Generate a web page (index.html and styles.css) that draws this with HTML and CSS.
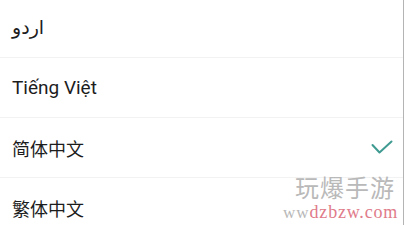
FILE: index.html
```html
<!DOCTYPE html>
<html>
<head>
<meta charset="utf-8">
<link rel="stylesheet" href="styles.css">
</head>
<body>
<div class="screen">
  <ul class="list">
    <li class="row"><span class="label urdu" dir="rtl">اردو</span></li>
    <li class="row"><span class="label latin">Tiếng Việt</span></li>
    <li class="row"><span class="label cjk">简体中文</span>
      <svg class="check" width="22" height="16" viewBox="0 0 22 16"><polyline points="1.5,5 8.5,12.5 20.5,1.5" fill="none" stroke="#3f9b92" stroke-width="2" stroke-linecap="round" stroke-linejoin="round"/></svg>
    </li>
    <li class="row"><span class="label cjk">繁体中文</span></li>
  </ul>
  <div class="wm">
    <div class="wm-cn">玩爆手游</div>
    <div class="wm-url"><span class="wm-gray">ww</span><span class="wm-red">dzbzw.com</span></div>
  </div>
</div>
</body>
</html>
```
FILE: styles.css
```css
html, body {
  margin: 0;
  padding: 0;
  background: #ffffff;
}
.screen {
  position: relative;
  width: 403px;
  height: 225px;
  overflow: hidden;
  border-right: 1px solid #b4b4b4;
  background: #ffffff;
}
.list {
  list-style: none;
  margin: -2px 0 0 0;
  padding: 0;
}
.row {
  box-sizing: border-box;
  height: 60px;
  border-bottom: 1px solid #f2f2f2;
  display: flex;
  align-items: center;
  justify-content: space-between;
  padding: 0 10px 0 12px;
  color: #1d1d1d;
  font-family: Roboto, "Noto Sans", "Noto Sans CJK SC", sans-serif;
  font-size: 18px;
}
.label {
  line-height: 1;
}
.latin {
  font-size: 19px;
}
.urdu {
  font-family: "DejaVu Sans", sans-serif;
  font-size: 19px;
}
.cjk {
  font-family: "Noto Sans CJK SC", sans-serif;
  font-size: 18px;
}
.check {
  display: block;
  margin-top: 1px;
}
.wm {
  position: absolute;
  left: 283px;
  top: 172px;
  width: 121px;
}
.wm-cn {
  margin-left: 12px;
  font-family: "Noto Sans CJK SC", sans-serif;
  font-size: 24px;
  line-height: 30px;
  letter-spacing: 1px;
  color: #b9b9b9;
}
.wm-url {
  display: flex;
  align-items: baseline;
  height: 20px;
  font-family: "Liberation Serif", serif;
  line-height: 20px;
  white-space: nowrap;
}
.wm-gray {
  font-size: 17px;
  color: #b8b8b8;
  letter-spacing: 1px;
}
.wm-red {
  font-size: 18px;
  color: #e07b8a;
  letter-spacing: 0.8px;
}
```
